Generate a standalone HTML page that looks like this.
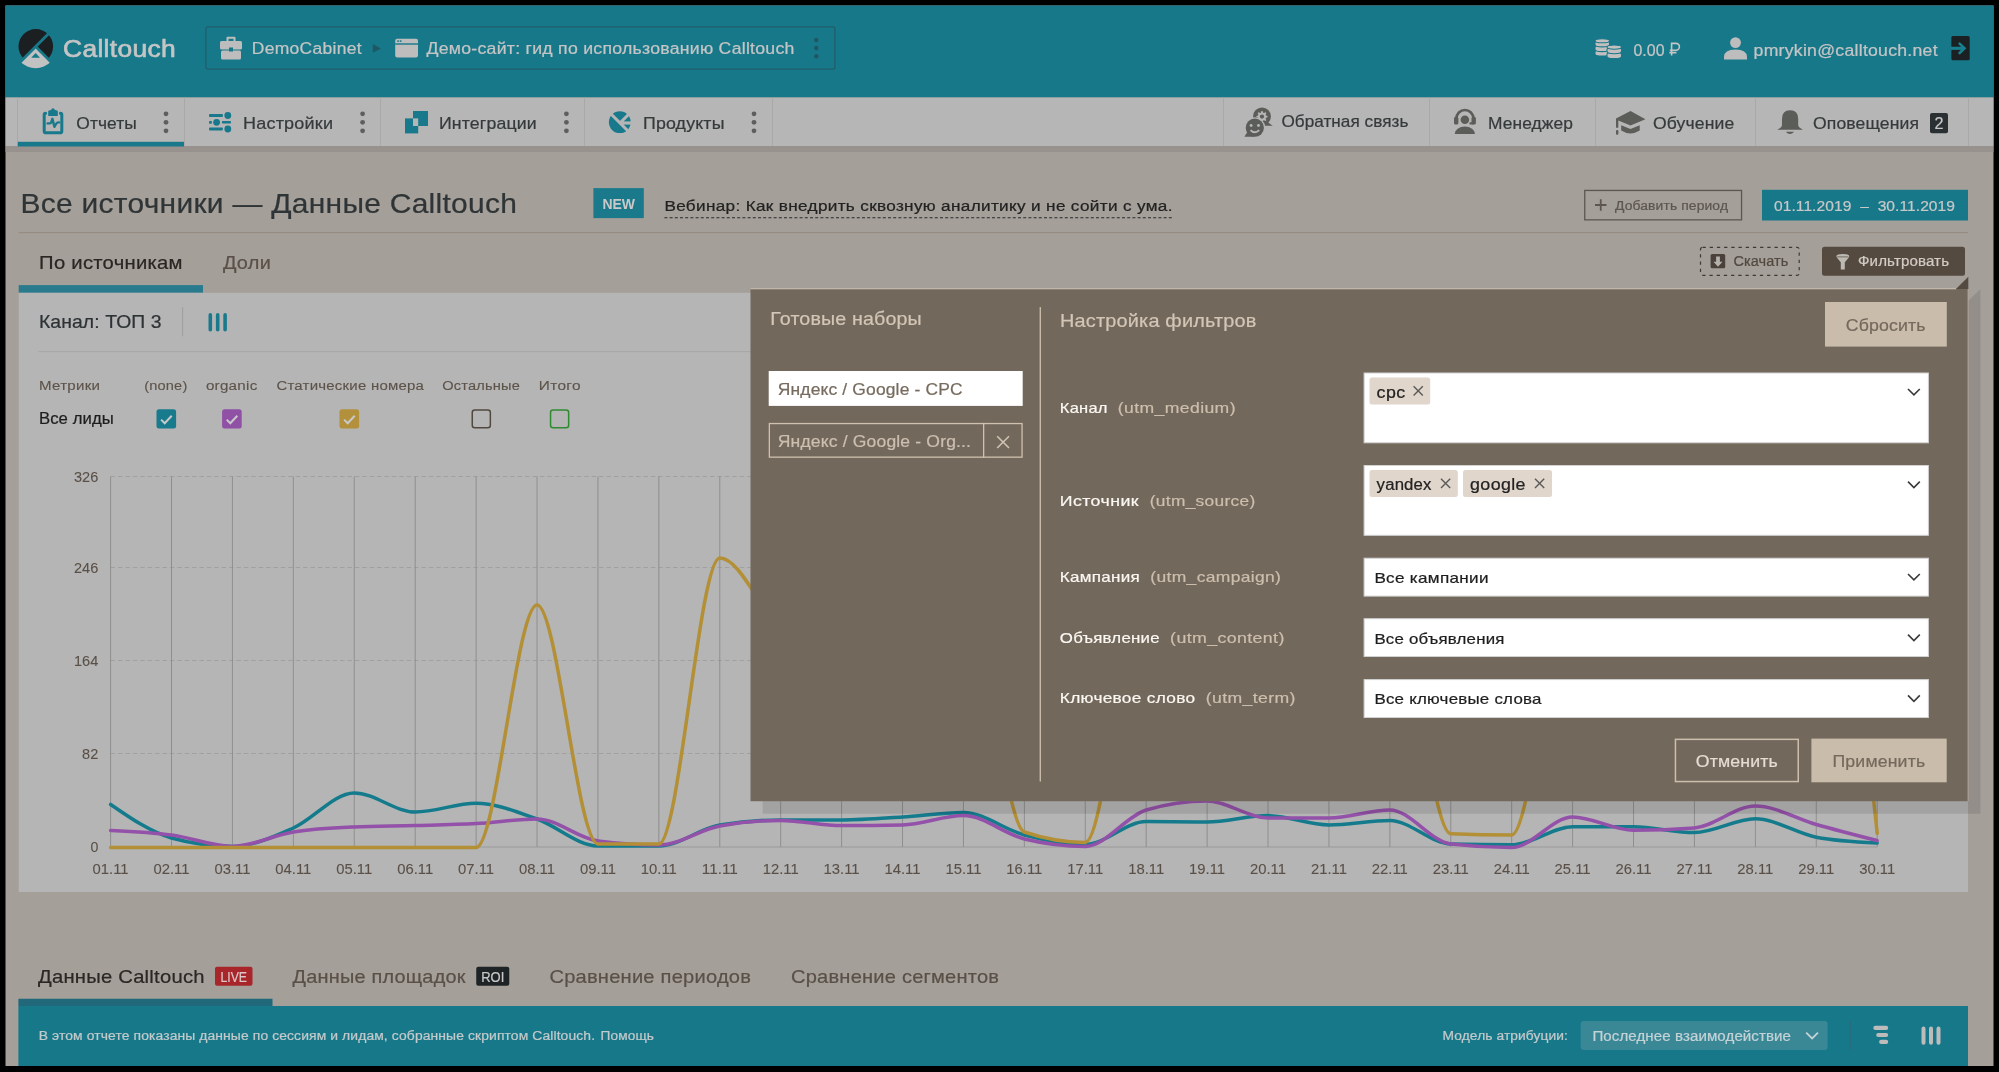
<!DOCTYPE html>
<html><head><meta charset="utf-8"><title>Calltouch</title>
<style>
html,body{margin:0;padding:0;background:#000;overflow:hidden;width:1999px;height:1072px}
svg{display:block;font-family:"Liberation Sans",sans-serif;will-change:transform}
text{white-space:pre}
</style></head><body>
<svg width="1999" height="1072" viewBox="0 0 1999 1072">
<rect x="0.00" y="0.00" width="1999.00" height="1072.00" fill="#000"/>
<rect x="5.50" y="5.50" width="1988.00" height="1060.50" fill="#a49f99"/>
<rect x="5.50" y="5.50" width="1988.00" height="92.00" fill="#17788a"/>
<rect x="5.50" y="97.50" width="1988.00" height="48.50" fill="#b6b6b6"/>
<rect x="5.50" y="146.00" width="1988.00" height="6.00" fill="#97928d"/>
<g>
<circle cx="35.8" cy="46.4" r="17.3" fill="#1b1f22"/>
<path d="M35.6,46.6 L50.87,61.87 A21.6,21.6 0 0 1 20.33,61.87 Z" fill="#c2c2c2"/>
<line x1="50" y1="32.2" x2="18" y2="64.2" stroke="#17788a" stroke-width="2.8"/>
<line x1="35.6" y1="46.6" x2="54" y2="65" stroke="#17788a" stroke-width="2.8"/>
<path d="M35.6,53.0 L40.0,57.8 L31.2,57.8 Z" fill="#17788a"/>
</g>
<text x="63.00" y="56.90" font-size="24.18" fill="#c5c5c5" font-weight="400" stroke="#c5c5c5" stroke-width="0.65" textLength="113.10" lengthAdjust="spacingAndGlyphs" letter-spacing="0.300">Calltouch</text>
<rect x="205.9" y="26.9" width="629" height="42.2" rx="2" fill="none" stroke="#205f6b" stroke-width="1.4"/>
<g fill="#bdbdbd"><path d="M226.5,41 v-3.2 q0,-1 1,-1 h7 q1,0 1,1 V41 h-2 v-2.2 h-5 V41 Z"/><rect x="220" y="41" width="22" height="8.4" rx="1.5"/><rect x="221" y="50.6" width="20" height="8.8" rx="1.5"/><rect x="229" y="47.5" width="4" height="4" fill="#17788a"/></g>
<text x="251.80" y="53.90" font-size="15.81" fill="#c5c5c5" font-weight="400" stroke="#c5c5c5" stroke-width="0.22" textLength="110.06" lengthAdjust="spacingAndGlyphs" letter-spacing="0.263">DemoCabinet</text>
<path d="M372.8,44 L381,48.4 L372.8,52.8 Z" fill="#1f5864"/>
<rect x="395.2" y="38.8" width="22.8" height="18.6" rx="2" fill="#bdbdbd"/><rect x="395.2" y="43.3" width="22.8" height="1.4" fill="#17788a"/><rect x="397.3" y="40.3" width="1.6" height="1.6" fill="#17788a"/><rect x="399.8" y="40.3" width="1.6" height="1.6" fill="#17788a"/>
<text x="426.50" y="53.90" font-size="15.81" fill="#c5c5c5" font-weight="400" stroke="#c5c5c5" stroke-width="0.22" textLength="368.14" lengthAdjust="spacingAndGlyphs" letter-spacing="0.237">Демо-сайт: гид по использованию Calltouch</text>
<circle cx="816.3" cy="40.0" r="2.3" fill="#1f5864"/>
<circle cx="816.3" cy="48.1" r="2.3" fill="#1f5864"/>
<circle cx="816.3" cy="56.2" r="2.3" fill="#1f5864"/>
<path d="M1595.00,51.80 A7.25,2.1 0 0 1 1609.50,51.80 V54.00 A7.25,2.1 0 0 1 1595.00,54.00 Z" fill="#c2c0bf" stroke="#17788a" stroke-width="1.1"/>
<path d="M1595.00,47.30 A7.25,2.1 0 0 1 1609.50,47.30 V49.50 A7.25,2.1 0 0 1 1595.00,49.50 Z" fill="#c2c0bf" stroke="#17788a" stroke-width="1.1"/>
<path d="M1595.00,42.60 A7.25,2.1 0 0 1 1609.50,42.60 V44.80 A7.25,2.1 0 0 1 1595.00,44.80 Z" fill="#c2c0bf" stroke="#17788a" stroke-width="1.1"/>
<ellipse cx="1602.25" cy="40.7" rx="7.25" ry="2.1" fill="#c2c0bf" stroke="#17788a" stroke-width="1.1"/>
<path d="M1607.00,54.20 A7.25,2.1 0 0 1 1621.50,54.20 V56.40 A7.25,2.1 0 0 1 1607.00,56.40 Z" fill="#c2c0bf" stroke="#17788a" stroke-width="1.1"/>
<path d="M1607.00,49.40 A7.25,2.1 0 0 1 1621.50,49.40 V51.60 A7.25,2.1 0 0 1 1607.00,51.60 Z" fill="#c2c0bf" stroke="#17788a" stroke-width="1.1"/>
<ellipse cx="1614.25" cy="47.1" rx="7.25" ry="2.1" fill="#c2c0bf" stroke="#17788a" stroke-width="1.1"/>
<text x="1633.50" y="55.60" font-size="17" fill="#c5c5c5" font-weight="400" stroke="#c5c5c5" stroke-width="0.22" textLength="31.00" lengthAdjust="spacingAndGlyphs">0.00</text>
<path d="M1671.6,55.6 V43.4 h4.4 a3.4,3.4 0 0 1 0,6.8 h-6.2 M1669.4,52.6 h7" fill="none" stroke="#c5c5c5" stroke-width="1.6"/>
<circle cx="1735.5" cy="42.6" r="5.4" fill="#bdbdbd"/><path d="M1724,59.5 v-2.5 q0,-7.5 11.5,-7.5 q11.5,0 11.5,7.5 v2.5 Z" fill="#bdbdbd"/>
<text x="1753.60" y="55.60" font-size="15.81" fill="#c5c5c5" font-weight="400" stroke="#c5c5c5" stroke-width="0.22" textLength="184.24" lengthAdjust="spacingAndGlyphs" letter-spacing="0.238">pmrykin@calltouch.net</text>
<rect x="1951.4" y="36" width="18.3" height="24.2" rx="1.5" fill="#1b2023"/>
<path d="M1951,48.3 h13" fill="none" stroke="#17808f" stroke-width="3.1"/><path d="M1959.6,43.6 l4.9,4.7 l-4.9,4.7" fill="none" stroke="#17808f" stroke-width="2.6" stroke-linecap="round"/>
<rect x="17.00" y="97.50" width="1.00" height="48.50" fill="#a9a9a9"/>
<rect x="184.00" y="97.50" width="1.00" height="48.50" fill="#a9a9a9"/>
<rect x="380.00" y="97.50" width="1.00" height="48.50" fill="#a9a9a9"/>
<rect x="584.00" y="97.50" width="1.00" height="48.50" fill="#a9a9a9"/>
<rect x="772.00" y="97.50" width="1.00" height="48.50" fill="#a9a9a9"/>
<rect x="1223.00" y="97.50" width="1.00" height="48.50" fill="#a9a9a9"/>
<rect x="1429.00" y="97.50" width="1.00" height="48.50" fill="#a9a9a9"/>
<rect x="1595.00" y="97.50" width="1.00" height="48.50" fill="#a9a9a9"/>
<rect x="1755.00" y="97.50" width="1.00" height="48.50" fill="#a9a9a9"/>
<rect x="1968.00" y="97.50" width="1.00" height="48.50" fill="#a9a9a9"/>
<rect x="17.80" y="141.80" width="166.20" height="4.70" fill="#17798b"/>
<text x="76.30" y="128.60" font-size="16.74" fill="#353a3a" font-weight="400" stroke="#353a3a" stroke-width="0.22" textLength="60.58" lengthAdjust="spacingAndGlyphs" letter-spacing="0.083">Отчеты</text>
<text x="243.00" y="128.60" font-size="16.74" fill="#353a3a" font-weight="400" stroke="#353a3a" stroke-width="0.22" textLength="90.20" lengthAdjust="spacingAndGlyphs" letter-spacing="0.198">Настройки</text>
<text x="439.00" y="128.60" font-size="16.74" fill="#353a3a" font-weight="400" stroke="#353a3a" stroke-width="0.22" textLength="97.74" lengthAdjust="spacingAndGlyphs" letter-spacing="0.141">Интеграции</text>
<text x="643.00" y="128.60" font-size="16.74" fill="#353a3a" font-weight="400" stroke="#353a3a" stroke-width="0.22" textLength="81.56" lengthAdjust="spacingAndGlyphs" letter-spacing="0.160">Продукты</text>
<text x="1281.40" y="127.40" font-size="16.74" fill="#353a3a" font-weight="400" stroke="#353a3a" stroke-width="0.22" textLength="127.05" lengthAdjust="spacingAndGlyphs" letter-spacing="0.048">Обратная связь</text>
<text x="1488.00" y="128.60" font-size="16.74" fill="#353a3a" font-weight="400" stroke="#353a3a" stroke-width="0.22" textLength="85.10" lengthAdjust="spacingAndGlyphs" letter-spacing="0.103">Менеджер</text>
<text x="1653.00" y="128.60" font-size="16.74" fill="#353a3a" font-weight="400" stroke="#353a3a" stroke-width="0.22" textLength="81.32" lengthAdjust="spacingAndGlyphs" letter-spacing="0.122">Обучение</text>
<text x="1813.00" y="128.60" font-size="16.74" fill="#353a3a" font-weight="400" stroke="#353a3a" stroke-width="0.22" textLength="106.13" lengthAdjust="spacingAndGlyphs" letter-spacing="0.126">Оповещения</text>
<circle cx="166" cy="113.8" r="2.4" fill="#5e5e5e"/>
<circle cx="166" cy="122.3" r="2.4" fill="#5e5e5e"/>
<circle cx="166" cy="130.8" r="2.4" fill="#5e5e5e"/>
<circle cx="362.6" cy="113.8" r="2.4" fill="#5e5e5e"/>
<circle cx="362.6" cy="122.3" r="2.4" fill="#5e5e5e"/>
<circle cx="362.6" cy="130.8" r="2.4" fill="#5e5e5e"/>
<circle cx="566.4" cy="113.8" r="2.4" fill="#5e5e5e"/>
<circle cx="566.4" cy="122.3" r="2.4" fill="#5e5e5e"/>
<circle cx="566.4" cy="130.8" r="2.4" fill="#5e5e5e"/>
<circle cx="754" cy="113.8" r="2.4" fill="#5e5e5e"/>
<circle cx="754" cy="122.3" r="2.4" fill="#5e5e5e"/>
<circle cx="754" cy="130.8" r="2.4" fill="#5e5e5e"/>
<rect x="1930" y="113" width="18" height="20.3" rx="2" fill="#2b3133"/>
<text x="1934.50" y="128.60" font-size="16" fill="#c8c8c8" font-weight="400" stroke="#c8c8c8" stroke-width="0.22" textLength="9.00" lengthAdjust="spacingAndGlyphs">2</text>
<path d="M45.6,113.2 q-1.4,0 -1.4,1.6 v16.4 q0,1.6 1.6,1.6 h14.4 q1.6,0 1.6,-1.6 v-16.4 q0,-1.6 -1.4,-1.6" fill="none" stroke="#17798b" stroke-width="3" stroke-linecap="round"/>
<path d="M48.2,111.2 q0,-0.6 0.8,-0.8 l2,-0.3 q0.6,-1.9 2,-1.9 q1.4,0 2,1.9 l2,0.3 q0.8,0.2 0.8,0.8 v4.2 q0,0.6 -0.6,0.6 h-8.4 q-0.6,0 -0.6,-0.6 Z" fill="#17798b"/>
<path d="M47.6,123.4 h2.4 q0.8,0 1.2,-1 l1.2,-3.6 l2,8 l1.6,-2.8 q0.8,-1.4 2.2,-1.6 h0.8" fill="none" stroke="#17798b" stroke-width="2.4" stroke-linecap="round" stroke-linejoin="round"/>
<g fill="#17798b"><rect x="209" y="114" width="13.9" height="3" rx="0.8"/><circle cx="227.8" cy="115.5" r="3.4"/><rect x="209" y="120.9" width="2.9" height="2.8" rx="0.8"/><circle cx="216.6" cy="122.3" r="3.4"/><rect x="221.9" y="121" width="9.1" height="2.6" rx="0.8"/><rect x="209" y="127.6" width="13.9" height="2.8" rx="0.8"/><circle cx="227.8" cy="129" r="3.4"/></g>
<g fill="#17798b"><rect x="413" y="111" width="15" height="15"/><rect x="405" y="118.4" width="13.2" height="15"/></g>
<rect x="413" y="118.4" width="5.2" height="7.6" fill="#b6b6b6"/>
<circle cx="619.8" cy="122.2" r="10.9" fill="#17798b"/>
<path d="M606,109 L634,137 M620,123 L634,109 M620,123 H634" fill="none" stroke="#b6b6b6" stroke-width="3.1"/>
<path d="M620,123 H634" fill="none" stroke="#b6b6b6" stroke-width="2.4"/>
<g fill="#5b5d59"><circle cx="1262" cy="116.4" r="8.9"/><path d="M1266,121 L1272.7,125.8 H1264 Z"/></g>
<path d="M1261.45,111.03 L1262.55,111.03 L1263.19,112.68 L1263.93,112.98 L1265.55,112.27 L1266.33,113.05 L1265.62,114.67 L1265.92,115.41 L1267.57,116.05 L1267.57,117.15 L1265.92,117.79 L1265.62,118.53 L1266.33,120.15 L1265.55,120.93 L1263.93,120.22 L1263.19,120.52 L1262.55,122.17 L1261.45,122.17 L1260.81,120.52 L1260.07,120.22 L1258.45,120.93 L1257.67,120.15 L1258.38,118.53 L1258.08,117.79 L1256.43,117.15 L1256.43,116.05 L1258.08,115.41 L1258.38,114.67 L1257.67,113.05 L1258.45,112.27 L1260.07,112.98 L1260.81,112.68 Z" fill="#b6b6b6"/><circle cx="1262" cy="116.6" r="2.1" fill="#5b5d59"/>
<circle cx="1254.8" cy="127.7" r="10.4" fill="#b6b6b6"/>
<g fill="#5b5d59"><circle cx="1254.8" cy="127.7" r="9.1"/><path d="M1244.4,136.7 H1254.8 L1248,131 Z"/></g>
<g fill="#b6b6b6"><circle cx="1251.1" cy="125.5" r="1.45"/><circle cx="1258.5" cy="125.5" r="1.45"/></g><path d="M1250.6,130.1 q4.2,4.4 8.6,0" fill="none" stroke="#b6b6b6" stroke-width="2"/>
<path d="M1456.4,118.5 A8.5,8.5 0 0 1 1473.4,118.5" fill="none" stroke="#5b5d59" stroke-width="2.6"/>
<g fill="#5b5d59"><rect x="1454" y="116.8" width="4.4" height="7.8" rx="1.6"/><rect x="1471.5" y="116.8" width="4.4" height="7.8" rx="1.6"/><rect x="1469.5" y="122.2" width="4" height="2.4" rx="0.6"/><circle cx="1464.9" cy="119.8" r="4.3"/><path d="M1454.7,133.9 A10.15,7.4 0 0 1 1475,133.9 Z"/></g>
<g fill="#5b5d59"><path d="M1616,118.4 L1630.5,111 L1645.4,119.3 L1630.5,125.6 L1618.3,120.4 V127.7 H1616 Z"/><path d="M1621.2,125.2 L1630.5,129.1 L1639.7,125.2 V130.6 Q1630.5,136.4 1621.2,130.6 Z"/><rect x="1616" y="130" width="2.4" height="4.7" rx="1"/></g>
<g fill="#5b5d59"><path d="M1790,110.3 q-8,0 -8,8.6 v6.2 q0,2.5 -4.2,4.2 v0.5 h24.6 v-0.5 q-4.2,-1.7 -4.2,-4.2 v-6.2 q0,-8.6 -8,-8.6 Z"/><path d="M1785.8,131.8 q4.15,4.4 8.3,0 Z"/></g>
<text x="20.40" y="213.10" font-size="27.9" fill="#2f3436" font-weight="400" stroke="#2f3436" stroke-width="0.22" textLength="496.77" lengthAdjust="spacingAndGlyphs" letter-spacing="0.266">Все источники — Данные Calltouch</text>
<rect x="593.40" y="188.10" width="50.40" height="30.00" fill="#1a7a8c"/>
<text x="602.40" y="208.70" font-size="14" fill="#c9c9c9" font-weight="700" textLength="32.60" lengthAdjust="spacingAndGlyphs">NEW</text>
<text x="664.40" y="210.80" font-size="14.88" fill="#222222" font-weight="400" stroke="#222222" stroke-width="0.22" textLength="508.39" lengthAdjust="spacingAndGlyphs" letter-spacing="0.292">Вебинар: Как внедрить сквозную аналитику и не сойти с ума.</text>
<line x1="664.4" y1="217.8" x2="1173" y2="217.8" stroke="#2a2a2a" stroke-width="1.1" stroke-dasharray="3 2.2"/>
<rect x="18.80" y="232.00" width="1949.20" height="1.20" fill="#968c83"/>
<rect x="1584.75" y="190.45" width="156.80" height="29.40" fill="none" stroke="#5d5650" stroke-width="1.3"/>
<path d="M1595,205 h11.5 M1600.75,199.3 v11.4" stroke="#5d5650" stroke-width="1.8"/>
<text x="1615.00" y="209.80" font-size="13.02" fill="#5d5650" font-weight="400" stroke="#5d5650" stroke-width="0.22" textLength="113.11" lengthAdjust="spacingAndGlyphs" letter-spacing="0.115">Добавить период</text>
<rect x="1762.00" y="189.80" width="206.00" height="30.70" fill="#17788a"/>
<text x="1774.00" y="210.60" font-size="15" fill="#c8c8c8" font-weight="400" stroke="#c8c8c8" stroke-width="0.22" textLength="181.05" lengthAdjust="spacingAndGlyphs" letter-spacing="0.049">01.11.2019  –  30.11.2019</text>
<rect x="1700.5" y="247.3" width="98.7" height="28" rx="2" fill="none" stroke="#3e3934" stroke-width="1.2" stroke-dasharray="3.3 3.9"/>
<rect x="1710.6" y="253.9" width="14.6" height="14.3" rx="1.5" fill="#4a423a"/><path d="M1716.1,256.4 h3.8 v5.4 h2.6 l-4.5,4.9 l-4.5,-4.9 h2.6 Z" fill="#b4b0aa"/>
<text x="1733.40" y="266.20" font-size="13.95" fill="#524940" font-weight="400" stroke="#524940" stroke-width="0.22" textLength="54.98" lengthAdjust="spacingAndGlyphs" letter-spacing="0.076">Скачать</text>
<rect x="1822" y="246.8" width="143" height="29" rx="2.5" fill="#544a40"/>
<path d="M1836.4,256.2 q0,-2.2 6.4,-2.2 q6.4,0 6.4,2.2 q0,1 -1.2,2.2 l-3.2,3.8 v7.4 h-4 v-7.4 l-3.2,-3.8 q-1.2,-1.2 -1.2,-2.2 Z" fill="#bdb9b3"/><path d="M1837.2,256.9 h11.2" stroke="#544a40" stroke-width="0.7"/>
<text x="1858.00" y="266.20" font-size="13.95" fill="#d2ccc5" font-weight="400" stroke="#d2ccc5" stroke-width="0.22" textLength="91.13" lengthAdjust="spacingAndGlyphs" letter-spacing="0.129">Фильтровать</text>
<text x="39.10" y="269.40" font-size="18.6" fill="#2a2623" font-weight="400" stroke="#2a2623" stroke-width="0.22" textLength="143.64" lengthAdjust="spacingAndGlyphs" letter-spacing="0.239">По источникам</text>
<text x="222.90" y="269.40" font-size="18.6" fill="#5a5048" font-weight="400" stroke="#5a5048" stroke-width="0.22" textLength="48.15" lengthAdjust="spacingAndGlyphs" letter-spacing="0.248">Доли</text>
<rect x="18.70" y="285.10" width="184.30" height="7.70" fill="#287a8c"/>
<rect x="18.70" y="292.80" width="1949.30" height="599.20" fill="#b5b5b5"/>
<text x="39.00" y="328.10" font-size="18.6" fill="#2d3234" font-weight="400" stroke="#2d3234" stroke-width="0.22" textLength="122.69" lengthAdjust="spacingAndGlyphs" letter-spacing="0.089">Канал: ТОП 3</text>
<rect x="182.10" y="307.30" width="1.00" height="29.00" fill="#9e9e9e"/>
<line x1="210.3" y1="314.9" x2="210.3" y2="329.8" stroke="#1a7a8c" stroke-width="3.6" stroke-linecap="round"/>
<line x1="217.7" y1="314.9" x2="217.7" y2="329.8" stroke="#1a7a8c" stroke-width="3.6" stroke-linecap="round"/>
<line x1="225.1" y1="314.9" x2="225.1" y2="329.8" stroke="#1a7a8c" stroke-width="3.6" stroke-linecap="round"/>
<rect x="38.30" y="351.10" width="1929.70" height="1.00" fill="#a7a7a7"/>
<text x="39.00" y="389.60" font-size="13.49" fill="#5d5349" font-weight="400" stroke="#5d5349" stroke-width="0.12" textLength="61.25" lengthAdjust="spacingAndGlyphs" letter-spacing="0.254">Метрики</text>
<text x="144.20" y="389.60" font-size="13.49" fill="#5d5349" font-weight="400" stroke="#5d5349" stroke-width="0.12" textLength="43.26" lengthAdjust="spacingAndGlyphs" letter-spacing="0.164">(none)</text>
<text x="205.90" y="389.60" font-size="13.49" fill="#5d5349" font-weight="400" stroke="#5d5349" stroke-width="0.12" textLength="51.64" lengthAdjust="spacingAndGlyphs" letter-spacing="0.239">organic</text>
<text x="276.40" y="389.60" font-size="13.49" fill="#5d5349" font-weight="400" stroke="#5d5349" stroke-width="0.12" textLength="147.81" lengthAdjust="spacingAndGlyphs" letter-spacing="0.209">Статические номера</text>
<text x="442.20" y="389.60" font-size="13.49" fill="#5d5349" font-weight="400" stroke="#5d5349" stroke-width="0.12" textLength="77.78" lengthAdjust="spacingAndGlyphs" letter-spacing="0.178">Остальные</text>
<text x="538.80" y="389.60" font-size="13.49" fill="#5d5349" font-weight="400" stroke="#5d5349" stroke-width="0.12" textLength="42.10" lengthAdjust="spacingAndGlyphs" letter-spacing="0.300">Итого</text>
<text x="39.00" y="423.80" font-size="16.28" fill="#1d1d1d" font-weight="400" stroke="#1d1d1d" stroke-width="0.22" textLength="74.77" lengthAdjust="spacingAndGlyphs" letter-spacing="0.067">Все лиды</text>
<rect x="156.5" y="409.3" width="19.6" height="19.2" rx="2.5" fill="#177b8d"/>
<path d="M161.1,419.6 l3.6,3.6 l7,-7.4" fill="none" stroke="#c9c9c9" stroke-width="2"/>
<rect x="222.1" y="409.3" width="19.6" height="19.2" rx="2.5" fill="#8f50a6"/>
<path d="M226.7,419.6 l3.6,3.6 l7,-7.4" fill="none" stroke="#c9c9c9" stroke-width="2"/>
<rect x="339.5" y="409.3" width="19.6" height="19.2" rx="2.5" fill="#b3903b"/>
<path d="M344.1,419.6 l3.6,3.6 l7,-7.4" fill="none" stroke="#c9c9c9" stroke-width="2"/>
<rect x="472.25" y="410.05" width="18.1" height="17.7" rx="2.5" fill="none" stroke="#51483f" stroke-width="1.5"/>
<rect x="550.55" y="410.05" width="18.1" height="17.7" rx="2.5" fill="none" stroke="#2f8a32" stroke-width="1.5"/>
<line x1="110.6" y1="476.5" x2="1877.2" y2="476.5" stroke="#a0a0a0" stroke-width="1" stroke-dasharray="4.6 2.8"/>
<line x1="110.6" y1="567.5" x2="1877.2" y2="567.5" stroke="#a0a0a0" stroke-width="1" stroke-dasharray="4.6 2.8"/>
<line x1="110.6" y1="660.5" x2="1877.2" y2="660.5" stroke="#a0a0a0" stroke-width="1" stroke-dasharray="4.6 2.8"/>
<line x1="110.6" y1="753.5" x2="1877.2" y2="753.5" stroke="#a0a0a0" stroke-width="1" stroke-dasharray="4.6 2.8"/>
<line x1="110.6" y1="847.0" x2="1877.2" y2="847.0" stroke="#9a9a9a" stroke-width="1"/>
<line x1="110.60" y1="476.5" x2="110.60" y2="847.0" stroke="#8f8f8f" stroke-width="1"/>
<line x1="171.52" y1="476.5" x2="171.52" y2="847.0" stroke="#8f8f8f" stroke-width="1"/>
<line x1="232.43" y1="476.5" x2="232.43" y2="847.0" stroke="#8f8f8f" stroke-width="1"/>
<line x1="293.35" y1="476.5" x2="293.35" y2="847.0" stroke="#8f8f8f" stroke-width="1"/>
<line x1="354.27" y1="476.5" x2="354.27" y2="847.0" stroke="#8f8f8f" stroke-width="1"/>
<line x1="415.19" y1="476.5" x2="415.19" y2="847.0" stroke="#8f8f8f" stroke-width="1"/>
<line x1="476.10" y1="476.5" x2="476.10" y2="847.0" stroke="#8f8f8f" stroke-width="1"/>
<line x1="537.02" y1="476.5" x2="537.02" y2="847.0" stroke="#8f8f8f" stroke-width="1"/>
<line x1="597.94" y1="476.5" x2="597.94" y2="847.0" stroke="#8f8f8f" stroke-width="1"/>
<line x1="658.85" y1="476.5" x2="658.85" y2="847.0" stroke="#8f8f8f" stroke-width="1"/>
<line x1="719.77" y1="476.5" x2="719.77" y2="847.0" stroke="#8f8f8f" stroke-width="1"/>
<line x1="780.69" y1="476.5" x2="780.69" y2="847.0" stroke="#8f8f8f" stroke-width="1"/>
<line x1="841.60" y1="476.5" x2="841.60" y2="847.0" stroke="#8f8f8f" stroke-width="1"/>
<line x1="902.52" y1="476.5" x2="902.52" y2="847.0" stroke="#8f8f8f" stroke-width="1"/>
<line x1="963.44" y1="476.5" x2="963.44" y2="847.0" stroke="#8f8f8f" stroke-width="1"/>
<line x1="1024.36" y1="476.5" x2="1024.36" y2="847.0" stroke="#8f8f8f" stroke-width="1"/>
<line x1="1085.27" y1="476.5" x2="1085.27" y2="847.0" stroke="#8f8f8f" stroke-width="1"/>
<line x1="1146.19" y1="476.5" x2="1146.19" y2="847.0" stroke="#8f8f8f" stroke-width="1"/>
<line x1="1207.11" y1="476.5" x2="1207.11" y2="847.0" stroke="#8f8f8f" stroke-width="1"/>
<line x1="1268.02" y1="476.5" x2="1268.02" y2="847.0" stroke="#8f8f8f" stroke-width="1"/>
<line x1="1328.94" y1="476.5" x2="1328.94" y2="847.0" stroke="#8f8f8f" stroke-width="1"/>
<line x1="1389.86" y1="476.5" x2="1389.86" y2="847.0" stroke="#8f8f8f" stroke-width="1"/>
<line x1="1450.77" y1="476.5" x2="1450.77" y2="847.0" stroke="#8f8f8f" stroke-width="1"/>
<line x1="1511.69" y1="476.5" x2="1511.69" y2="847.0" stroke="#8f8f8f" stroke-width="1"/>
<line x1="1572.61" y1="476.5" x2="1572.61" y2="847.0" stroke="#8f8f8f" stroke-width="1"/>
<line x1="1633.52" y1="476.5" x2="1633.52" y2="847.0" stroke="#8f8f8f" stroke-width="1"/>
<line x1="1694.44" y1="476.5" x2="1694.44" y2="847.0" stroke="#8f8f8f" stroke-width="1"/>
<line x1="1755.36" y1="476.5" x2="1755.36" y2="847.0" stroke="#8f8f8f" stroke-width="1"/>
<line x1="1816.28" y1="476.5" x2="1816.28" y2="847.0" stroke="#8f8f8f" stroke-width="1"/>
<line x1="1877.19" y1="476.5" x2="1877.19" y2="847.0" stroke="#8f8f8f" stroke-width="1"/>
<text x="74.00" y="481.50" font-size="14.5" fill="#5a5048" font-weight="400" stroke="#5a5048" stroke-width="0.1" textLength="24.31" lengthAdjust="spacingAndGlyphs" letter-spacing="0.011">326</text>
<text x="74.00" y="572.50" font-size="14.5" fill="#5a5048" font-weight="400" stroke="#5a5048" stroke-width="0.1" textLength="24.31" lengthAdjust="spacingAndGlyphs" letter-spacing="0.011">246</text>
<text x="74.00" y="665.50" font-size="14.5" fill="#5a5048" font-weight="400" stroke="#5a5048" stroke-width="0.1" textLength="24.31" lengthAdjust="spacingAndGlyphs" letter-spacing="0.011">164</text>
<text x="82.10" y="758.50" font-size="14.5" fill="#5a5048" font-weight="400" stroke="#5a5048" stroke-width="0.1" textLength="16.21" lengthAdjust="spacingAndGlyphs" letter-spacing="0.014">82</text>
<text x="90.40" y="852.00" font-size="14.5" fill="#5a5048" font-weight="400" stroke="#5a5048" stroke-width="0.1" textLength="7.90" lengthAdjust="spacingAndGlyphs">0</text>
<text x="92.60" y="874.00" font-size="15" fill="#5a5048" font-weight="400" stroke="#5a5048" stroke-width="0.1" textLength="36.00" lengthAdjust="spacingAndGlyphs">01.11</text>
<text x="153.52" y="874.00" font-size="15" fill="#5a5048" font-weight="400" stroke="#5a5048" stroke-width="0.1" textLength="36.00" lengthAdjust="spacingAndGlyphs">02.11</text>
<text x="214.43" y="874.00" font-size="15" fill="#5a5048" font-weight="400" stroke="#5a5048" stroke-width="0.1" textLength="36.00" lengthAdjust="spacingAndGlyphs">03.11</text>
<text x="275.35" y="874.00" font-size="15" fill="#5a5048" font-weight="400" stroke="#5a5048" stroke-width="0.1" textLength="36.00" lengthAdjust="spacingAndGlyphs">04.11</text>
<text x="336.27" y="874.00" font-size="15" fill="#5a5048" font-weight="400" stroke="#5a5048" stroke-width="0.1" textLength="36.00" lengthAdjust="spacingAndGlyphs">05.11</text>
<text x="397.19" y="874.00" font-size="15" fill="#5a5048" font-weight="400" stroke="#5a5048" stroke-width="0.1" textLength="36.00" lengthAdjust="spacingAndGlyphs">06.11</text>
<text x="458.10" y="874.00" font-size="15" fill="#5a5048" font-weight="400" stroke="#5a5048" stroke-width="0.1" textLength="36.00" lengthAdjust="spacingAndGlyphs">07.11</text>
<text x="519.02" y="874.00" font-size="15" fill="#5a5048" font-weight="400" stroke="#5a5048" stroke-width="0.1" textLength="36.00" lengthAdjust="spacingAndGlyphs">08.11</text>
<text x="579.94" y="874.00" font-size="15" fill="#5a5048" font-weight="400" stroke="#5a5048" stroke-width="0.1" textLength="36.00" lengthAdjust="spacingAndGlyphs">09.11</text>
<text x="640.85" y="874.00" font-size="15" fill="#5a5048" font-weight="400" stroke="#5a5048" stroke-width="0.1" textLength="36.00" lengthAdjust="spacingAndGlyphs">10.11</text>
<text x="701.77" y="874.00" font-size="15" fill="#5a5048" font-weight="400" stroke="#5a5048" stroke-width="0.1" textLength="36.00" lengthAdjust="spacingAndGlyphs">11.11</text>
<text x="762.69" y="874.00" font-size="15" fill="#5a5048" font-weight="400" stroke="#5a5048" stroke-width="0.1" textLength="36.00" lengthAdjust="spacingAndGlyphs">12.11</text>
<text x="823.60" y="874.00" font-size="15" fill="#5a5048" font-weight="400" stroke="#5a5048" stroke-width="0.1" textLength="36.00" lengthAdjust="spacingAndGlyphs">13.11</text>
<text x="884.52" y="874.00" font-size="15" fill="#5a5048" font-weight="400" stroke="#5a5048" stroke-width="0.1" textLength="36.00" lengthAdjust="spacingAndGlyphs">14.11</text>
<text x="945.44" y="874.00" font-size="15" fill="#5a5048" font-weight="400" stroke="#5a5048" stroke-width="0.1" textLength="36.00" lengthAdjust="spacingAndGlyphs">15.11</text>
<text x="1006.36" y="874.00" font-size="15" fill="#5a5048" font-weight="400" stroke="#5a5048" stroke-width="0.1" textLength="36.00" lengthAdjust="spacingAndGlyphs">16.11</text>
<text x="1067.27" y="874.00" font-size="15" fill="#5a5048" font-weight="400" stroke="#5a5048" stroke-width="0.1" textLength="36.00" lengthAdjust="spacingAndGlyphs">17.11</text>
<text x="1128.19" y="874.00" font-size="15" fill="#5a5048" font-weight="400" stroke="#5a5048" stroke-width="0.1" textLength="36.00" lengthAdjust="spacingAndGlyphs">18.11</text>
<text x="1189.11" y="874.00" font-size="15" fill="#5a5048" font-weight="400" stroke="#5a5048" stroke-width="0.1" textLength="36.00" lengthAdjust="spacingAndGlyphs">19.11</text>
<text x="1250.02" y="874.00" font-size="15" fill="#5a5048" font-weight="400" stroke="#5a5048" stroke-width="0.1" textLength="36.00" lengthAdjust="spacingAndGlyphs">20.11</text>
<text x="1310.94" y="874.00" font-size="15" fill="#5a5048" font-weight="400" stroke="#5a5048" stroke-width="0.1" textLength="36.00" lengthAdjust="spacingAndGlyphs">21.11</text>
<text x="1371.86" y="874.00" font-size="15" fill="#5a5048" font-weight="400" stroke="#5a5048" stroke-width="0.1" textLength="36.00" lengthAdjust="spacingAndGlyphs">22.11</text>
<text x="1432.77" y="874.00" font-size="15" fill="#5a5048" font-weight="400" stroke="#5a5048" stroke-width="0.1" textLength="36.00" lengthAdjust="spacingAndGlyphs">23.11</text>
<text x="1493.69" y="874.00" font-size="15" fill="#5a5048" font-weight="400" stroke="#5a5048" stroke-width="0.1" textLength="36.00" lengthAdjust="spacingAndGlyphs">24.11</text>
<text x="1554.61" y="874.00" font-size="15" fill="#5a5048" font-weight="400" stroke="#5a5048" stroke-width="0.1" textLength="36.00" lengthAdjust="spacingAndGlyphs">25.11</text>
<text x="1615.52" y="874.00" font-size="15" fill="#5a5048" font-weight="400" stroke="#5a5048" stroke-width="0.1" textLength="36.00" lengthAdjust="spacingAndGlyphs">26.11</text>
<text x="1676.44" y="874.00" font-size="15" fill="#5a5048" font-weight="400" stroke="#5a5048" stroke-width="0.1" textLength="36.00" lengthAdjust="spacingAndGlyphs">27.11</text>
<text x="1737.36" y="874.00" font-size="15" fill="#5a5048" font-weight="400" stroke="#5a5048" stroke-width="0.1" textLength="36.00" lengthAdjust="spacingAndGlyphs">28.11</text>
<text x="1798.28" y="874.00" font-size="15" fill="#5a5048" font-weight="400" stroke="#5a5048" stroke-width="0.1" textLength="36.00" lengthAdjust="spacingAndGlyphs">29.11</text>
<text x="1859.19" y="874.00" font-size="15" fill="#5a5048" font-weight="400" stroke="#5a5048" stroke-width="0.1" textLength="36.00" lengthAdjust="spacingAndGlyphs">30.11</text>
<path d="M110.60,804.40 C130.91,818.40 151.21,832.40 171.52,838.00 C191.82,843.60 212.13,846.40 232.43,846.40 C252.74,846.40 273.05,836.90 293.35,828.00 C313.66,819.10 333.96,793.00 354.27,793.00 C374.57,793.00 394.88,812.00 415.19,812.00 C435.49,812.00 455.80,803.30 476.10,803.30 C496.41,803.30 516.71,811.88 537.02,819.00 C557.32,826.12 577.63,846.00 597.94,846.00 C618.24,846.00 638.55,846.00 658.85,846.00 C679.16,846.00 699.46,828.33 719.77,825.00 C740.08,821.67 760.38,820.00 780.69,820.00 C800.99,820.00 821.30,820.00 841.60,820.00 C861.91,820.00 882.22,818.27 902.52,817.00 C922.83,815.73 943.13,812.40 963.44,812.40 C983.74,812.40 1004.05,829.67 1024.36,835.00 C1044.66,840.33 1064.97,844.40 1085.27,844.40 C1105.58,844.40 1125.88,821.60 1146.19,821.60 C1166.49,821.60 1186.80,822.00 1207.11,822.00 C1227.41,822.00 1247.72,815.60 1268.02,815.60 C1288.33,815.60 1308.63,825.00 1328.94,825.00 C1349.25,825.00 1369.55,820.60 1389.86,820.60 C1410.16,820.60 1430.47,843.47 1450.77,844.00 C1471.08,844.53 1491.39,844.80 1511.69,844.80 C1532.00,844.80 1552.30,826.80 1572.61,826.80 C1592.91,826.80 1613.22,826.80 1633.52,826.80 C1653.83,826.80 1674.14,832.60 1694.44,832.60 C1714.75,832.60 1735.05,818.80 1755.36,818.80 C1775.66,818.80 1795.97,833.33 1816.28,837.20 C1836.58,841.07 1856.89,842.03 1877.19,843.00" fill="none" stroke="#147b8d" stroke-width="3.5" stroke-linejoin="round" stroke-linecap="round"/>
<path d="M110.60,830.40 C130.91,831.37 151.21,832.33 171.52,835.00 C191.82,837.67 212.13,846.40 232.43,846.40 C252.74,846.40 273.05,835.23 293.35,832.00 C313.66,828.77 333.96,827.93 354.27,827.00 C374.57,826.07 394.88,826.17 415.19,825.60 C435.49,825.03 455.80,824.70 476.10,823.60 C496.41,822.50 516.71,819.00 537.02,819.00 C557.32,819.00 577.63,838.33 597.94,841.00 C618.24,843.67 638.55,845.00 658.85,845.00 C679.16,845.00 699.46,829.73 719.77,826.00 C740.08,822.27 760.38,820.40 780.69,820.40 C800.99,820.40 821.30,825.60 841.60,825.60 C861.91,825.60 882.22,825.40 902.52,825.00 C922.83,824.60 943.13,815.60 963.44,815.60 C983.74,815.60 1004.05,834.07 1024.36,839.00 C1044.66,843.93 1064.97,846.40 1085.27,846.40 C1105.58,846.40 1125.88,816.00 1146.19,810.00 C1166.49,804.00 1186.80,801.00 1207.11,801.00 C1227.41,801.00 1247.72,818.00 1268.02,818.00 C1288.33,818.00 1308.63,818.00 1328.94,818.00 C1349.25,818.00 1369.55,810.00 1389.86,810.00 C1410.16,810.00 1430.47,841.67 1450.77,844.00 C1471.08,846.33 1491.39,847.50 1511.69,847.50 C1532.00,847.50 1552.30,817.00 1572.61,817.00 C1592.91,817.00 1613.22,830.30 1633.52,830.30 C1653.83,830.30 1674.14,829.53 1694.44,828.00 C1714.75,826.47 1735.05,806.00 1755.36,806.00 C1775.66,806.00 1795.97,818.73 1816.28,824.50 C1836.58,830.27 1856.89,835.43 1877.19,840.60" fill="none" stroke="#9351a9" stroke-width="3.5" stroke-linejoin="round" stroke-linecap="round"/>
<path d="M110.60,847.50 C130.91,847.50 151.21,847.50 171.52,847.50 C191.82,847.50 212.13,847.50 232.43,847.50 C252.74,847.50 273.05,847.50 293.35,847.50 C313.66,847.50 333.96,847.50 354.27,847.50 C374.57,847.50 394.88,847.50 415.19,847.50 C435.49,847.50 455.80,847.50 476.10,847.50 C496.41,847.50 516.71,605.00 537.02,605.00 C557.32,605.00 577.63,844.00 597.94,844.00 C618.24,844.00 638.55,844.00 658.85,844.00 C679.16,844.00 699.46,558.00 719.77,558.00 C740.08,558.00 760.38,611.00 780.69,628.00 C800.99,645.00 821.30,660.00 841.60,660.00 C861.91,660.00 882.22,652.00 902.52,640.00 C922.83,628.00 943.13,588.00 963.44,588.00 C983.74,588.00 1004.05,825.07 1024.36,832.00 C1044.66,838.93 1064.97,842.40 1085.27,842.40 C1105.58,842.40 1125.88,577.00 1146.19,577.00 C1166.49,577.00 1186.80,592.83 1207.11,600.00 C1227.41,607.17 1247.72,620.00 1268.02,620.00 C1288.33,620.00 1308.63,605.33 1328.94,600.00 C1349.25,594.67 1369.55,588.00 1389.86,588.00 C1410.16,588.00 1430.47,832.90 1450.77,833.70 C1471.08,834.50 1491.39,834.90 1511.69,834.90 C1532.00,834.90 1552.30,577.00 1572.61,577.00 C1592.91,577.00 1613.22,592.83 1633.52,600.00 C1653.83,607.17 1674.14,620.00 1694.44,620.00 C1714.75,620.00 1735.05,613.33 1755.36,600.00 C1775.66,586.67 1795.97,450.00 1816.28,450.00 C1836.58,450.00 1856.89,641.65 1877.19,833.30" fill="none" stroke="#b38f36" stroke-width="3.5" stroke-linejoin="round" stroke-linecap="round"/>
<path d="M762.6,301 H1968 L1980.4,289 V813.8 H762.6 Z" fill="#000" fill-opacity="0.1"/>
<rect x="750.50" y="288.70" width="1217.80" height="512.50" fill="#73685c"/>
<rect x="750.50" y="288.20" width="1205.50" height="1.10" fill="#c9c0b4"/>
<rect x="1967.60" y="288.70" width="1.00" height="512.50" fill="#c9c0b4" fill-opacity="0.7"/>
<path d="M1956,289 L1968.3,276.8 V289 Z" fill="#544a40"/>
<text x="770.30" y="324.60" font-size="18.6" fill="#d3c6b6" font-weight="400" stroke="#d3c6b6" stroke-width="0.22" textLength="151.52" lengthAdjust="spacingAndGlyphs" letter-spacing="0.124">Готовые наборы</text>
<rect x="1039.60" y="307.10" width="1.40" height="474.40" fill="#c9bba9"/>
<text x="1060.00" y="326.50" font-size="18.6" fill="#d3c6b6" font-weight="400" stroke="#d3c6b6" stroke-width="0.22" textLength="196.57" lengthAdjust="spacingAndGlyphs" letter-spacing="0.174">Настройка фильтров</text>
<rect x="768.70" y="371.00" width="254.00" height="34.90" fill="#ffffff"/>
<text x="777.80" y="394.80" font-size="16.28" fill="#776b5f" font-weight="400" stroke="#776b5f" stroke-width="0.22" textLength="184.95" lengthAdjust="spacingAndGlyphs" letter-spacing="0.153">Яндекс / Google - CPC</text>
<rect x="769.35" y="423.55" width="252.70" height="33.60" fill="none" stroke="#cfc1af" stroke-width="1.3"/>
<rect x="983.00" y="422.90" width="1.30" height="34.90" fill="#cfc1af"/>
<path d="M997.2,436.2 L1009,448 M1009,436.2 L997.2,448" stroke="#d0c3b2" stroke-width="1.6"/>
<text x="777.80" y="447.40" font-size="16.28" fill="#cdbfb0" font-weight="400" stroke="#cdbfb0" stroke-width="0.22" textLength="193.35" lengthAdjust="spacingAndGlyphs" letter-spacing="0.151">Яндекс / Google - Org...</text>
<rect x="1825.00" y="302.00" width="121.80" height="44.60" fill="#c9bcab"/>
<text x="1845.80" y="330.60" font-size="16.74" fill="#74695d" font-weight="400" stroke="#74695d" stroke-width="0.22" textLength="79.95" lengthAdjust="spacingAndGlyphs" letter-spacing="0.154">Сбросить</text>
<text x="1059.80" y="413.40" font-size="15.35" fill="#fbf8f3" font-weight="400" stroke="#fbf8f3" stroke-width="0.22" textLength="47.91" lengthAdjust="spacingAndGlyphs" letter-spacing="0.213">Канал</text>
<text x="1117.80" y="413.40" font-size="15.35" fill="#cdbfae" font-weight="400" stroke="#cdbfae" stroke-width="0.22" textLength="118.14" lengthAdjust="spacingAndGlyphs" letter-spacing="0.343">(utm_medium)</text>
<text x="1059.80" y="505.50" font-size="15.35" fill="#fbf8f3" font-weight="400" stroke="#fbf8f3" stroke-width="0.22" textLength="79.16" lengthAdjust="spacingAndGlyphs" letter-spacing="0.365">Источник</text>
<text x="1149.80" y="505.50" font-size="15.35" fill="#cdbfae" font-weight="400" stroke="#cdbfae" stroke-width="0.22" textLength="105.77" lengthAdjust="spacingAndGlyphs" letter-spacing="0.274">(utm_source)</text>
<text x="1059.80" y="582.40" font-size="15.35" fill="#fbf8f3" font-weight="400" stroke="#fbf8f3" stroke-width="0.22" textLength="80.28" lengthAdjust="spacingAndGlyphs" letter-spacing="0.279">Кампания</text>
<text x="1150.30" y="582.40" font-size="15.35" fill="#cdbfae" font-weight="400" stroke="#cdbfae" stroke-width="0.22" textLength="131.00" lengthAdjust="spacingAndGlyphs" letter-spacing="0.305">(utm_campaign)</text>
<text x="1059.80" y="643.10" font-size="15.35" fill="#fbf8f3" font-weight="400" stroke="#fbf8f3" stroke-width="0.22" textLength="100.02" lengthAdjust="spacingAndGlyphs" letter-spacing="0.221">Объявление</text>
<text x="1170.10" y="643.10" font-size="15.35" fill="#cdbfae" font-weight="400" stroke="#cdbfae" stroke-width="0.22" textLength="114.63" lengthAdjust="spacingAndGlyphs" letter-spacing="0.327">(utm_content)</text>
<text x="1059.80" y="703.30" font-size="15.35" fill="#fbf8f3" font-weight="400" stroke="#fbf8f3" stroke-width="0.22" textLength="135.58" lengthAdjust="spacingAndGlyphs" letter-spacing="0.277">Ключевое слово</text>
<text x="1205.80" y="703.30" font-size="15.35" fill="#cdbfae" font-weight="400" stroke="#cdbfae" stroke-width="0.22" textLength="89.92" lengthAdjust="spacingAndGlyphs" letter-spacing="0.323">(utm_term)</text>
<rect x="1364.10" y="373.00" width="564.30" height="69.80" fill="#ffffff" stroke="#d2d2d2" stroke-width="1"/>
<path d="M1908,389.00 l5.9,5.9 l5.9,-5.9" fill="none" stroke="#3a3a3a" stroke-width="1.6"/>
<rect x="1364.10" y="465.50" width="564.30" height="69.80" fill="#ffffff" stroke="#d2d2d2" stroke-width="1"/>
<path d="M1908,481.60 l5.9,5.9 l5.9,-5.9" fill="none" stroke="#3a3a3a" stroke-width="1.6"/>
<rect x="1364.10" y="558.20" width="564.30" height="37.90" fill="#ffffff" stroke="#d2d2d2" stroke-width="1"/>
<path d="M1908,574.00 l5.9,5.9 l5.9,-5.9" fill="none" stroke="#3a3a3a" stroke-width="1.6"/>
<rect x="1364.10" y="618.70" width="564.30" height="37.80" fill="#ffffff" stroke="#d2d2d2" stroke-width="1"/>
<path d="M1908,634.60 l5.9,5.9 l5.9,-5.9" fill="none" stroke="#3a3a3a" stroke-width="1.6"/>
<rect x="1364.10" y="679.60" width="564.30" height="37.90" fill="#ffffff" stroke="#d2d2d2" stroke-width="1"/>
<path d="M1908,695.40 l5.9,5.9 l5.9,-5.9" fill="none" stroke="#3a3a3a" stroke-width="1.6"/>
<rect x="1369.5" y="377.4" width="60.70" height="27.00" rx="2.5" fill="#e0d6cb"/>
<text x="1376.60" y="397.60" font-size="15.81" fill="#222222" font-weight="400" stroke="#222222" stroke-width="0.22" textLength="29.00" lengthAdjust="spacingAndGlyphs" letter-spacing="0.400">cpc</text>
<path d="M1413.6,386.30 l9.2,9.2 M1422.8,386.30 l-9.2,9.2" stroke="#5a5a5a" stroke-width="1.4"/>
<rect x="1369.5" y="470" width="88.30" height="26.90" rx="2.5" fill="#e0d6cb"/>
<text x="1376.60" y="490.20" font-size="15.81" fill="#222222" font-weight="400" stroke="#222222" stroke-width="0.22" textLength="55.06" lengthAdjust="spacingAndGlyphs" letter-spacing="0.157">yandex</text>
<path d="M1441,478.85 l9.2,9.2 M1450.2,478.85 l-9.2,9.2" stroke="#5a5a5a" stroke-width="1.4"/>
<rect x="1463" y="470" width="89.00" height="26.90" rx="2.5" fill="#e0d6cb"/>
<text x="1470.10" y="490.20" font-size="15.81" fill="#222222" font-weight="400" stroke="#222222" stroke-width="0.22" textLength="55.72" lengthAdjust="spacingAndGlyphs" letter-spacing="0.317">google</text>
<path d="M1535,478.85 l9.2,9.2 M1544.2,478.85 l-9.2,9.2" stroke="#5a5a5a" stroke-width="1.4"/>
<text x="1374.40" y="583.40" font-size="15.35" fill="#1e1e1e" font-weight="400" stroke="#1e1e1e" stroke-width="0.22" textLength="114.37" lengthAdjust="spacingAndGlyphs" letter-spacing="0.275">Все кампании</text>
<text x="1374.40" y="644.00" font-size="15.35" fill="#1e1e1e" font-weight="400" stroke="#1e1e1e" stroke-width="0.22" textLength="130.20" lengthAdjust="spacingAndGlyphs" letter-spacing="0.201">Все объявления</text>
<text x="1374.40" y="704.20" font-size="15.35" fill="#1e1e1e" font-weight="400" stroke="#1e1e1e" stroke-width="0.22" textLength="167.32" lengthAdjust="spacingAndGlyphs" letter-spacing="0.221">Все ключевые слова</text>
<rect x="1675.45" y="739.35" width="122.80" height="42.20" fill="none" stroke="#cdbfae" stroke-width="1.5"/>
<text x="1695.80" y="766.80" font-size="16.74" fill="#e6ddd2" font-weight="400" stroke="#e6ddd2" stroke-width="0.22" textLength="82.16" lengthAdjust="spacingAndGlyphs" letter-spacing="0.157">Отменить</text>
<rect x="1811.40" y="738.60" width="135.30" height="43.70" fill="#c9bcab"/>
<text x="1832.50" y="766.80" font-size="16.74" fill="#74695d" font-weight="400" stroke="#74695d" stroke-width="0.22" textLength="92.75" lengthAdjust="spacingAndGlyphs" letter-spacing="0.153">Применить</text>
<text x="38.00" y="982.50" font-size="18.6" fill="#2a2724" font-weight="400" stroke="#2a2724" stroke-width="0.22" textLength="166.72" lengthAdjust="spacingAndGlyphs" letter-spacing="0.221">Данные Calltouch</text>
<rect x="215" y="966.75" width="37.5" height="19" rx="2" fill="#a8252a"/>
<text x="220.50" y="981.75" font-size="14" fill="#dcc8c8" font-weight="400" stroke="#dcc8c8" stroke-width="0.22" textLength="26.50" lengthAdjust="spacingAndGlyphs">LIVE</text>
<text x="292.50" y="982.50" font-size="18.6" fill="#5a5048" font-weight="400" stroke="#5a5048" stroke-width="0.22" textLength="173.21" lengthAdjust="spacingAndGlyphs" letter-spacing="0.205">Данные площадок</text>
<rect x="476.25" y="966.75" width="33" height="19" rx="2" fill="#1e2326"/>
<text x="481.20" y="981.75" font-size="14" fill="#c8c8c8" font-weight="400" stroke="#c8c8c8" stroke-width="0.22" textLength="23.10" lengthAdjust="spacingAndGlyphs">ROI</text>
<text x="549.40" y="982.50" font-size="18.6" fill="#5a5048" font-weight="400" stroke="#5a5048" stroke-width="0.22" textLength="201.81" lengthAdjust="spacingAndGlyphs" letter-spacing="0.215">Сравнение периодов</text>
<text x="791.00" y="982.50" font-size="18.6" fill="#5a5048" font-weight="400" stroke="#5a5048" stroke-width="0.22" textLength="208.21" lengthAdjust="spacingAndGlyphs" letter-spacing="0.207">Сравнение сегментов</text>
<rect x="18.40" y="998.75" width="254.10" height="7.25" fill="#20687a"/>
<rect x="18.40" y="1006.00" width="1949.60" height="60.00" fill="#17788a"/>
<text x="38.75" y="1040.00" font-size="13.02" fill="#c3cacb" font-weight="400" stroke="#c3cacb" stroke-width="0.22" textLength="556.36" lengthAdjust="spacingAndGlyphs" letter-spacing="0.106">В этом отчете показаны данные по сессиям и лидам, собранные скриптом Calltouch.</text>
<text x="600.50" y="1040.00" font-size="13.02" fill="#c3cacb" font-weight="400" stroke="#c3cacb" stroke-width="0.22" textLength="53.63" lengthAdjust="spacingAndGlyphs" letter-spacing="0.129">Помощь</text>
<text x="1442.60" y="1040.00" font-size="13.02" fill="#c3cacb" font-weight="400" stroke="#c3cacb" stroke-width="0.22" textLength="125.29" lengthAdjust="spacingAndGlyphs" letter-spacing="0.087">Модель атрибуции:</text>
<rect x="1580.7" y="1021" width="246.9" height="29" rx="3" fill="#3a8796"/>
<text x="1592.40" y="1041.00" font-size="14.42" fill="#c5d3d6" font-weight="400" stroke="#c5d3d6" stroke-width="0.22" textLength="198.69" lengthAdjust="spacingAndGlyphs" letter-spacing="0.085">Последнее взаимодействие</text>
<path d="M1806.2,1032.6 l5.9,5.9 l5.9,-5.9" fill="none" stroke="#c5d3d6" stroke-width="1.8"/>
<rect x="1849.90" y="1021.00" width="1.00" height="29.00" fill="#2a6b78"/>
<g stroke="#bebcbb" stroke-linecap="round" stroke-width="4.2" fill="none"><path d="M1875.4,1027.9 h10.7 M1878.3,1035 h7.8 M1881.2,1041.9 h4.9"/></g>
<g stroke="#bebcbb" stroke-linecap="round" stroke-width="4" fill="none"><path d="M1923.5,1028.5 v14.2 M1931,1028.5 v14.2 M1938.5,1028.5 v14.2"/></g>
</svg>
</body></html>
